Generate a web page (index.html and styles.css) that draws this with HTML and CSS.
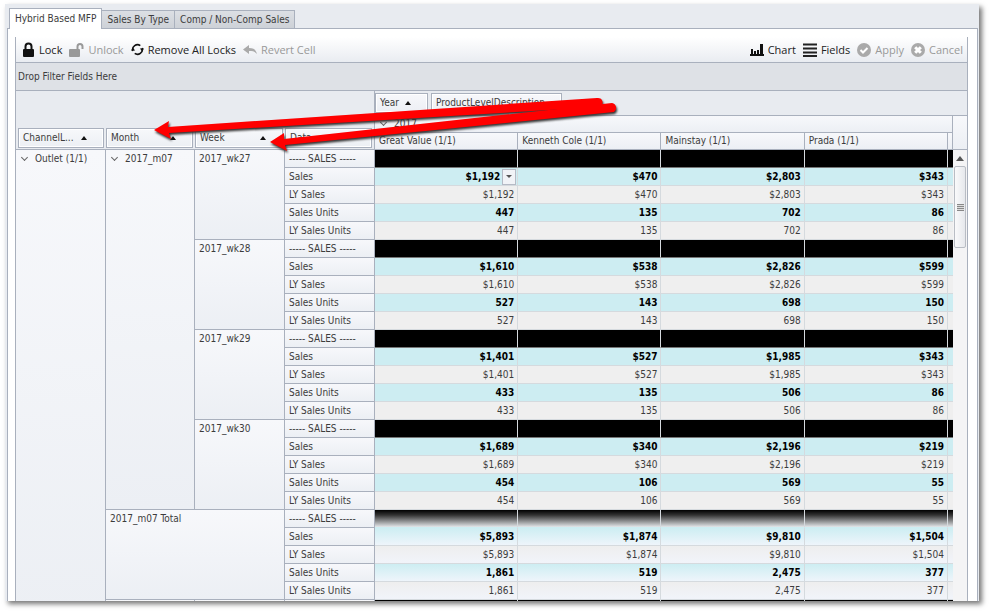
FILE: index.html
```html
<!DOCTYPE html>
<html lang="en">
<head>
<meta charset="utf-8">
<title>Hybrid Based MFP</title>
<link rel="stylesheet" href="styles.css">
</head>
<body>
<main class="window">
  <nav class="tabs">
    <button class="tab active">Hybrid Based MFP</button>
    <button class="tab">Sales By Type</button>
    <button class="tab">Comp / Non-Comp Sales</button>
  </nav>
  <section class="panel">
    <div class="pivot">
      <div class="toolbar">
        <button class="tool"><svg width="13" height="16" viewBox="0 0 13 16"><path d="M3.500 8V4.500a3 3 0 0 1 6 0V8" fill="none" stroke="#111" stroke-width="2"/><rect x="1" y="7" width="11" height="8" rx="1" fill="#111"/></svg>Lock</button>
        <button class="tool" disabled><svg width="15" height="16" viewBox="0 0 15 16"><path d="M8.500 8V4.500a2.500 2.500 0 0 1 5 0V7" fill="none" stroke="#999" stroke-width="2"/><rect x="0" y="7" width="11" height="8" rx="1" fill="#999"/></svg>Unlock</button>
        <button class="tool"><svg width="13" height="13" viewBox="0 0 14 14"><path d="M2 8.500A5.200 5.200 0 0 1 10 2.800M12 5.500A5.200 5.200 0 0 1 4 11.200" fill="none" stroke="#111" stroke-width="1.800"/><path d="M0 8h4.500L2 5zM14 6H9.500l2.500 3z" fill="#111"/></svg>Remove All Locks</button>
        <button class="tool" disabled><svg width="14" height="12" viewBox="0 0 14 12"><path d="M6 1v3c5 0 7 2 8 6-2-2.500-4-3-8-3v3L0 5.500z" fill="#aaa"/></svg>Revert Cell</button>
        <span class="spacer"></span>
        <button class="tool"><svg width="14" height="12" viewBox="0 0 14 12"><path d="M0 10h14v2H0zM1 5h2v6H1zM4 7h2v4H4zM7 6h2v5H7zM10 0h3v11h-3z" fill="#111"/></svg>Chart</button>
        <button class="tool"><svg width="14" height="14" viewBox="0 0 14 14"><path d="M0 1.500h14M0 5.500h14M0 9.500h14M0 13h14" stroke="#222" stroke-width="2"/></svg>Fields</button>
        <button class="tool" disabled><svg width="14" height="14" viewBox="0 0 14 14"><circle cx="7" cy="7" r="7" fill="#aaa"/><path d="M3.500 7l2.500 2.500 4.500-4.500" fill="none" stroke="#fff" stroke-width="2"/></svg>Apply</button>
        <button class="tool" disabled><svg width="14" height="14" viewBox="0 0 14 14"><circle cx="7" cy="7" r="7" fill="#aaa"/><path d="M4.200 4.200l5.600 5.600M9.800 4.200l-5.600 5.600" stroke="#fff" stroke-width="3"/></svg>Cancel</button>
      </div>
      <div class="filters">Drop Filter Fields Here</div>
      <div class="sheet">
        <div class="grid-area">
        <table class="grid">
          <colgroup><col class="c-a"><col class="c-b"><col class="c-a"><col class="c-a"><col><col><col><col><col class="c-end"></colgroup>
          <thead>
            <tr class="fields-row">
              <th rowspan="3" class="corner first"><button class="field">ChannelL...<i class="up"></i></button></th>
              <th rowspan="3" class="corner"><button class="field">Month<i class="up"></i></button></th>
              <th rowspan="3" class="corner"><button class="field">Week<i class="up"></i></button></th>
              <th rowspan="3" class="corner data"><button class="field">Data</button></th>
              <th colspan="5" class="col-fields"><div class="field-list"><button class="field year">Year<i class="up"></i></button><button class="field desc">ProductLevelDescription<i class="up"></i></button></div></th>
            </tr>
            <tr class="year-row"><th colspan="5"><i class="chev"></i>2017</th></tr>
            <tr class="names"><th>Great Value (1/1)</th><th>Kenneth Cole (1/1)</th><th>Mainstay (1/1)</th><th>Prada (1/1)</th><th class="end"></th></tr>
          </thead>
          <tbody>
            <tr class="sep"><th rowspan="26" class="group"><i class="chev"></i>Outlet (1/1)</th><th rowspan="20" class="group"><i class="chev"></i>2017_m07</th><th rowspan="5" class="group">2017_wk27</th><th>----- SALES -----</th><td></td><td></td><td></td><td></td><td></td></tr>
            <tr class="main"><th>Sales</th><td class="current"><div class="editor">$1,192<button class="drop" aria-label="Open cell menu"></button></div></td><td>$470</td><td>$2,803</td><td>$343</td><td></td></tr>
            <tr><th>LY Sales</th><td>$1,192</td><td>$470</td><td>$2,803</td><td>$343</td><td></td></tr>
            <tr class="main"><th>Sales Units</th><td>447</td><td>135</td><td>702</td><td>86</td><td></td></tr>
            <tr><th>LY Sales Units</th><td>447</td><td>135</td><td>702</td><td>86</td><td></td></tr>
            <tr class="sep"><th rowspan="5" class="group">2017_wk28</th><th>----- SALES -----</th><td></td><td></td><td></td><td></td><td></td></tr>
            <tr class="main"><th>Sales</th><td>$1,610</td><td>$538</td><td>$2,826</td><td>$599</td><td></td></tr>
            <tr><th>LY Sales</th><td>$1,610</td><td>$538</td><td>$2,826</td><td>$599</td><td></td></tr>
            <tr class="main"><th>Sales Units</th><td>527</td><td>143</td><td>698</td><td>150</td><td></td></tr>
            <tr><th>LY Sales Units</th><td>527</td><td>143</td><td>698</td><td>150</td><td></td></tr>
            <tr class="sep"><th rowspan="5" class="group">2017_wk29</th><th>----- SALES -----</th><td></td><td></td><td></td><td></td><td></td></tr>
            <tr class="main"><th>Sales</th><td>$1,401</td><td>$527</td><td>$1,985</td><td>$343</td><td></td></tr>
            <tr><th>LY Sales</th><td>$1,401</td><td>$527</td><td>$1,985</td><td>$343</td><td></td></tr>
            <tr class="main"><th>Sales Units</th><td>433</td><td>135</td><td>506</td><td>86</td><td></td></tr>
            <tr><th>LY Sales Units</th><td>433</td><td>135</td><td>506</td><td>86</td><td></td></tr>
            <tr class="sep"><th rowspan="5" class="group">2017_wk30</th><th>----- SALES -----</th><td></td><td></td><td></td><td></td><td></td></tr>
            <tr class="main"><th>Sales</th><td>$1,689</td><td>$340</td><td>$2,196</td><td>$219</td><td></td></tr>
            <tr><th>LY Sales</th><td>$1,689</td><td>$340</td><td>$2,196</td><td>$219</td><td></td></tr>
            <tr class="main"><th>Sales Units</th><td>454</td><td>106</td><td>569</td><td>55</td><td></td></tr>
            <tr><th>LY Sales Units</th><td>454</td><td>106</td><td>569</td><td>55</td><td></td></tr>
            <tr class="sep total"><th rowspan="5" colspan="2" class="group">2017_m07 Total</th><th>----- SALES -----</th><td></td><td></td><td></td><td></td><td></td></tr>
            <tr class="main total"><th>Sales</th><td>$5,893</td><td>$1,874</td><td>$9,810</td><td>$1,504</td><td></td></tr>
            <tr class="total"><th>LY Sales</th><td>$5,893</td><td>$1,874</td><td>$9,810</td><td>$1,504</td><td></td></tr>
            <tr class="main total"><th>Sales Units</th><td>1,861</td><td>519</td><td>2,475</td><td>377</td><td></td></tr>
            <tr class="total"><th>LY Sales Units</th><td>1,861</td><td>519</td><td>2,475</td><td>377</td><td></td></tr>
            <tr class="sep"><th></th><th></th><th></th><td></td><td></td><td></td><td></td><td></td></tr>
          </tbody>
        </table>
        </div>
        <div class="scroll">
          <div class="scroll-head"></div>
          <button class="scroll-up" aria-label="Scroll up"></button>
          <div class="thumb"></div>
        </div>
      </div>
    </div>
  </section>
  <svg class="arrows" width="480" height="72" viewBox="150 88 480 72">
    <path fill="#f00" d="M154 130L169 121L168 127L597 98A4.500 4.500 0 0 1 599 107L169 133L171 139Z"/>
    <path fill="#f00" d="M270 142L284 133L284 139L612 103A5 5 0 0 1 614 112L285 145L287 151Z"/>
  </svg>
</main>
</body>
</html>
```
FILE: styles.css
```css
* { box-sizing: border-box; }
body {
  margin: 0;
  height: 100vh;
  padding: 4px 12px 12px 5px;
  display: flex;
  background: #fff;
  color: #3c3c3c;
  font: 10px/12px "DejaVu Sans Condensed", "DejaVu Sans", sans-serif;
}
button {
  margin: 0;
  padding: 0;
  border: 0;
  background: none;
  color: inherit;
  font: inherit;
}
.window {
  position: relative;
  flex: 1;
  min-width: 0;
  display: flex;
  flex-direction: column;
  padding: 0 1px 0 2px;
  background: #e8ebf0;
  box-shadow: 3px 3px 5px #777;
}
.tabs { display: flex; align-items: flex-end; height: 24px; padding-left: 2px; }
.tab {
  height: 18px;
  padding: 0 5px;
  border: 1px solid #a9b0bd;
  border-width: 1px 1px 0 0;
  background: linear-gradient(#dcdfe4, #cdd1d7);
}
.tab.active {
  position: relative;
  height: 21px;
  margin-bottom: -1px;
  border-left-width: 1px;
  background: #fff;
}
.panel {
  flex: 1;
  min-height: 0;
  display: flex;
  padding: 8px 9px 0 7px;
  border: 1px solid #a9b0bd;
  border-bottom: 0;
  background: #fff;
}
.pivot {
  flex: 1;
  min-width: 0;
  display: flex;
  flex-direction: column;
  border: 1px solid #a9b0bd;
  border-width: 0 1px;
  background: #e8ebf0;
}
.toolbar {
  flex: none;
  display: flex;
  align-items: center;
  gap: 7px;
  height: 26px;
  padding: 0 4px 0 6px;
  border-bottom: 1px solid #a9b0bd;
  background: linear-gradient(#fff, #e9ecf1);
  font: 11px/14px "Open Sans", "Noto Sans", sans-serif;
}
.tool { display: flex; align-items: center; gap: 4px; color: #222; }
.tool:disabled { color: #999; }
.spacer { flex: 1; }
.filters {
  flex: none;
  height: 28px;
  padding: 8px 2px;
  border-bottom: 1px solid #a9b0bd;
  background: #dee1e6;
}
.sheet { flex: 1; min-height: 0; display: flex; overflow: hidden; }
.grid-area { flex: 1; min-width: 0; }
.grid {
  width: 100%;
  table-layout: fixed;
  border-spacing: 0;
}
.c-a { width: 90px; }
.c-b { width: 89px; }
.c-end { width: 5px; }
.grid th, .grid td {
  height: 18px;
  padding: 0 4px;
  border: 1px solid #a9b0bd;
  border-width: 0 1px 1px 0;
  background: linear-gradient(#f7f8fb, #eceff4);
  font-weight: normal;
  text-align: left;
  white-space: nowrap;
}
.grid .corner {
  padding: 0 2px 1px 0;
  border-right: 0;
  background: #e8ebf0;
  vertical-align: bottom;
}
.grid .corner.first { padding-left: 2px; }
.grid .corner.data { border-right: 1px solid #a9b0bd; }
.grid .col-fields { height: 25px; padding: 0; border-right: 0; background: #e8ebf0; }
.grid .year-row th, .grid .names th { height: 17px; }
.grid th.end, .grid td:last-child { padding: 0; }
.field-list { display: flex; gap: 3px; }
.field {
  display: flex;
  align-items: center;
  justify-content: space-between;
  gap: 6px;
  width: 100%;
  height: 20px;
  padding: 0 16px 0 4px;
  border: 1px solid #a9b0bd;
  background: linear-gradient(#f7f8fb, #eceff4);
  box-shadow: inset 0 0 0 1px #fff;
}
.field-list .field { width: auto; }
.field-list .desc { gap: 4px; padding-right: 6px; }
.up { border: 3px solid transparent; border-width: 0 3px 4px; border-bottom-color: #111; }
.chev {
  display: inline-block;
  width: 5px;
  height: 5px;
  margin: 0 8px 2px 2px;
  border: solid #666;
  border-width: 0 1px 1px 0;
  transform: rotate(45deg);
}
.grid .group { padding-top: 3px; vertical-align: top; }
.grid td {
  padding: 0 3px;
  border-color: #d5dade;
  background: #efefef;
  text-align: right;
}
.grid .main td { background: #cdedf2; color: #000; font-weight: bold; }
.grid .sep td { border-bottom-color: #777; background: #000; }
.grid .total td { background: linear-gradient(#eee, #f1f4fa); }
.grid .main.total td { background: linear-gradient(#cdedf2, #eef5fb); }
.grid .sep.total td { border-bottom-color: #cdedf2; background: linear-gradient(#000, #333 30%, #e4e7ea); }
.grid td:last-child { border-right: 0; }
.grid .current { padding: 0 1px; }
.editor { display: flex; justify-content: flex-end; align-items: center; gap: 2px; }
.drop {
  display: grid;
  place-items: center;
  width: 14px;
  height: 16px;
  border: 1px solid #b5bac5;
  background: #f1f3f7;
}
.drop::before { content: ""; border: 3px solid transparent; border-width: 3px 3px 0; border-top-color: #555; }
.scroll {
  flex: none;
  display: flex;
  flex-direction: column;
  width: 14px;
  padding-top: 24px;
  background: linear-gradient(#e8ebf0 24px, #f4f4f5 24px);
}
.scroll-head {
  height: 35px;
  border: 1px solid #a9b0bd;
  border-width: 1px 0;
  background: linear-gradient(#f7f8fb, #eceff4);
}
.scroll-up { display: grid; place-items: center; height: 16px; }
.scroll-up::before { content: ""; border: 4px solid transparent; border-width: 0 4px 5px; border-bottom-color: #555; }
.thumb {
  display: grid;
  place-items: center;
  height: 82px;
  margin: 0 1px;
  border: 1px solid #b9bdc4;
  border-radius: 2px;
  background: linear-gradient(90deg, #fafafb, #e6e8ec);
}
.thumb::before {
  content: "";
  width: 7px;
  height: 7px;
  background: repeating-linear-gradient(#888 0 1px, #ddd 1px 2px);
}
.arrows {
  position: absolute;
  left: 145px;
  top: 84px;
  filter: drop-shadow(1px 2px 1px #333);
  pointer-events: none;
}
```
